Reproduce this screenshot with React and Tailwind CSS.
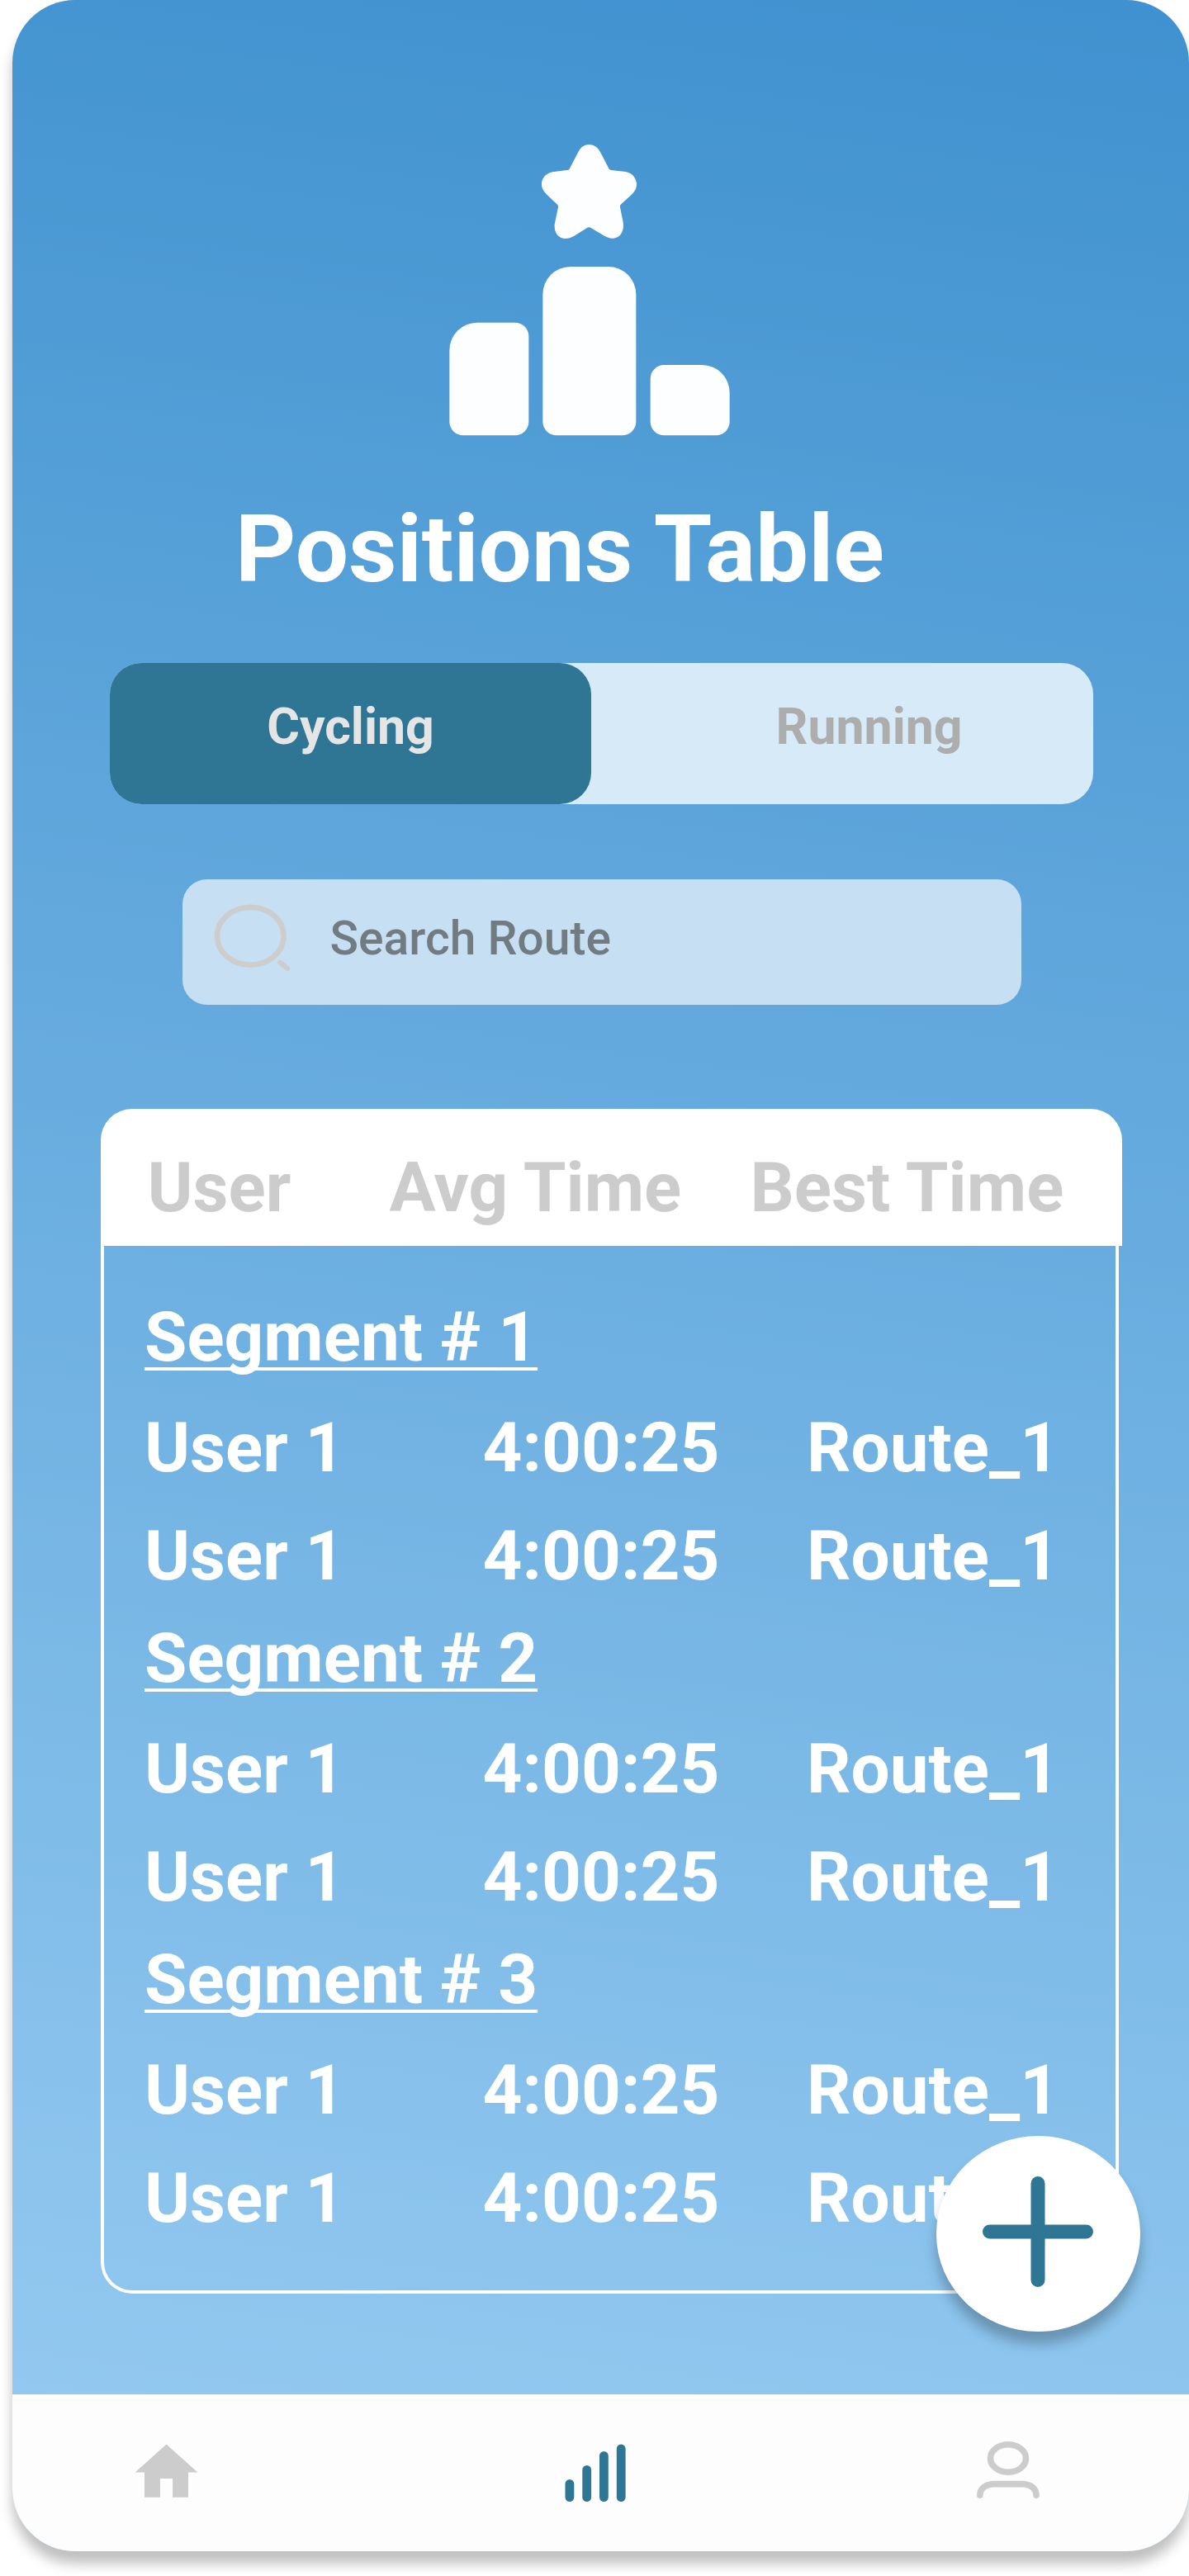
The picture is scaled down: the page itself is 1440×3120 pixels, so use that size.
const SEGMENTS = [1, 2, 3];
const ROWS = [0, 1];

function PodiumIcon() {
  return (
    <svg className="block h-[362px] w-[342px]" viewBox="0 0 1026 1086" fill="#fdfeff">
      <path d="M436 115L466 57Q479 25 508 24Q538 25 552 57L581 113Q584 116 588 117L634 122C662 124 677 142 681 165C682 184 674 195 664 205L625 241Q619 246 621 252L632 307C636 336 625 363 597 365C584 366 572 360 564 356L515 327Q508 323 501 327L454 356C444 362 434 366 420 366C394 364 381 342 383 314L396 252Q397 246 393 242L355 206C342 193 336 183 336 168C336 147 351 129 376 124L429 117Q434 117 436 115Z" />
      <path d="M102 671H239A50 50 0 0 1 289 721V1031A50 50 0 0 1 239 1081H51A50 50 0 0 1 1 1031V772A101 101 0 0 1 102 671Z" />
      <path d="M441 468H577A101 101 0 0 1 679 569V1031A50 50 0 0 1 629 1081H390A50 50 0 0 1 340 1031V569A101 101 0 0 1 441 468Z" />
      <path d="M781 825H918A101 101 0 0 1 1019 926V1031A50 50 0 0 1 969 1081H781A50 50 0 0 1 731 1031V875A50 50 0 0 1 781 825Z" />
    </svg>
  );
}

function SearchIcon() {
  return (
    <svg className="block h-[84px] w-[94px]" viewBox="257 1094 94 84" fill="none" stroke="#cdcdcd" strokeWidth="6.6" strokeLinecap="round">
      <ellipse cx="302.3" cy="1133.8" rx="40.4" ry="34.9" />
      <path d="M338.3 1165.6L347.2 1173" strokeWidth="6" />
    </svg>
  );
}

function HomeIcon() {
  return (
    <svg className="block h-[91px] w-[91px]" viewBox="0 0 24 24" fill="#cccccc">
      <path d="M10 20v-6h4v6h5v-8h3L12 3 2 12h3v8z" />
    </svg>
  );
}

function BarsIcon() {
  return (
    <svg className="block h-[91px] w-[91px]" viewBox="675 2948 91 91" fill="#2f7695">
      <rect x="684.5" y="3002" width="10.8" height="27" rx="5.4" />
      <rect x="705.3" y="2985" width="10.8" height="44" rx="5.4" />
      <rect x="726" y="2968" width="10.8" height="61" rx="5.4" />
      <rect x="746.8" y="2959.5" width="10.8" height="69.5" rx="5.4" />
    </svg>
  );
}

function ProfileIcon() {
  return (
    <svg className="block h-[91px] w-[91px]" viewBox="1175 2948 91 91" fill="none" stroke="#cccccc" strokeWidth="7.6" strokeLinecap="round">
      <ellipse cx="1221" cy="2976.5" rx="21.5" ry="16.8" />
      <path d="M1186.8 3021.2C1186.8 3013 1194 3007.6 1204 3007.6H1238C1248 3007.6 1255 3013 1255 3021.2" />
    </svg>
  );
}

function PlusIcon() {
  return (
    <svg className="block h-[134px] w-[134px]" viewBox="0 0 134 134" fill="none" stroke="#2f7695" strokeWidth="17" strokeLinecap="round">
      <path d="M67 8.5V125.5M8.5 67H125.5" />
    </svg>
  );
}

export default function App() {
  return (
    <div className="h-[3120px] w-[1440px] overflow-hidden bg-white pl-[15px] font-['Roboto',sans-serif]">
      <main className="relative flex h-[3089.5px] w-[1425px] flex-col rounded-[76px] bg-[linear-gradient(188deg,#3f91cf_0%,#98ccf2_100%)] shadow-[0_15px_15px_rgba(0,0,0,0.25)]">
        <header className="h-[527px] shrink-0 pl-[529px] pt-[166.7px]">
          <PodiumIcon />
        </header>
        <h1 className="mt-[71px] shrink-0 whitespace-nowrap pl-[270px] text-[114px] font-bold leading-[134px] text-white">Positions Table</h1>

        <div className="ml-[118px] mt-[71px] flex h-[171px] w-[1191px] shrink-0 rounded-[38px] bg-[#d7eaf8] text-[60.8px] font-bold leading-[60px]">
          <div className="w-[583px] rounded-[38px] bg-[#2f7695] pt-[48px] text-center text-[#e5e5e5]">Cycling</div>
          <div className="pl-[223.5px] pt-[48px] text-[#adadad]">Running</div>
        </div>

        <div className="ml-[205.5px] mt-[91px] flex h-[152px] w-[1016px] shrink-0 rounded-[30px] bg-[#c7dff2] pl-[37px] pt-[29px]">
          <SearchIcon />
          <span className="ml-[48px] mt-[13px] whitespace-nowrap text-[57px] font-medium leading-[60px] text-[#717c82]">Search Route</span>
        </div>

        <section className="ml-[106.5px] mt-[126px] w-[1237px] shrink-0">
          <div className="flex h-[166px] whitespace-nowrap rounded-t-[38px] bg-white pt-[43px] text-[83.6px] font-bold leading-[104px] text-[#cccccc]">
            <div className="w-[350px] pl-[57px]">User</div>
            <div className="w-[437px]">Avg Time</div>
            <div>Best Time</div>
          </div>
          <div className="h-[1269px] w-[1233px] whitespace-nowrap rounded-b-[38px] border-x-4 border-b-4 border-white pl-[49.5px] pt-[52px] text-[83.6px] font-bold text-white">
            {SEGMENTS.map((n) => (
              <div key={n} className="h-[389.1px]">
                <div className="h-[127.1px] leading-[117px]">
                  <span className="underline decoration-[4px] underline-offset-[8px] [text-decoration-skip-ink:none]">Segment # {n}</span>
                </div>
                {ROWS.map((r) => (
                  <div key={r} className="flex leading-[131px]">
                    <div className="w-[409.5px]">User 1</div>
                    <div className="w-[392.5px]">4:00:25</div>
                    <div>Route_1</div>
                  </div>
                ))}
              </div>
            ))}
          </div>
        </section>

        <nav className="mt-auto flex h-[190px] shrink-0 rounded-b-[76px] bg-[#fdfdfd] pt-[49px]">
          <div className="w-[519px] pl-[141px]"><HomeIcon /></div>
          <div className="w-[500px] pl-[141px]"><BarsIcon /></div>
          <div className="pl-[141px]"><ProfileIcon /></div>
        </nav>

        <button className="absolute left-[1118.5px] top-[2587px] flex h-[236.5px] w-[247.5px] items-center justify-center rounded-[50%] bg-white pb-[4px] shadow-[0_15px_15px_rgba(0,0,0,0.25)]">
          <PlusIcon />
        </button>
      </main>
    </div>
  );
}
